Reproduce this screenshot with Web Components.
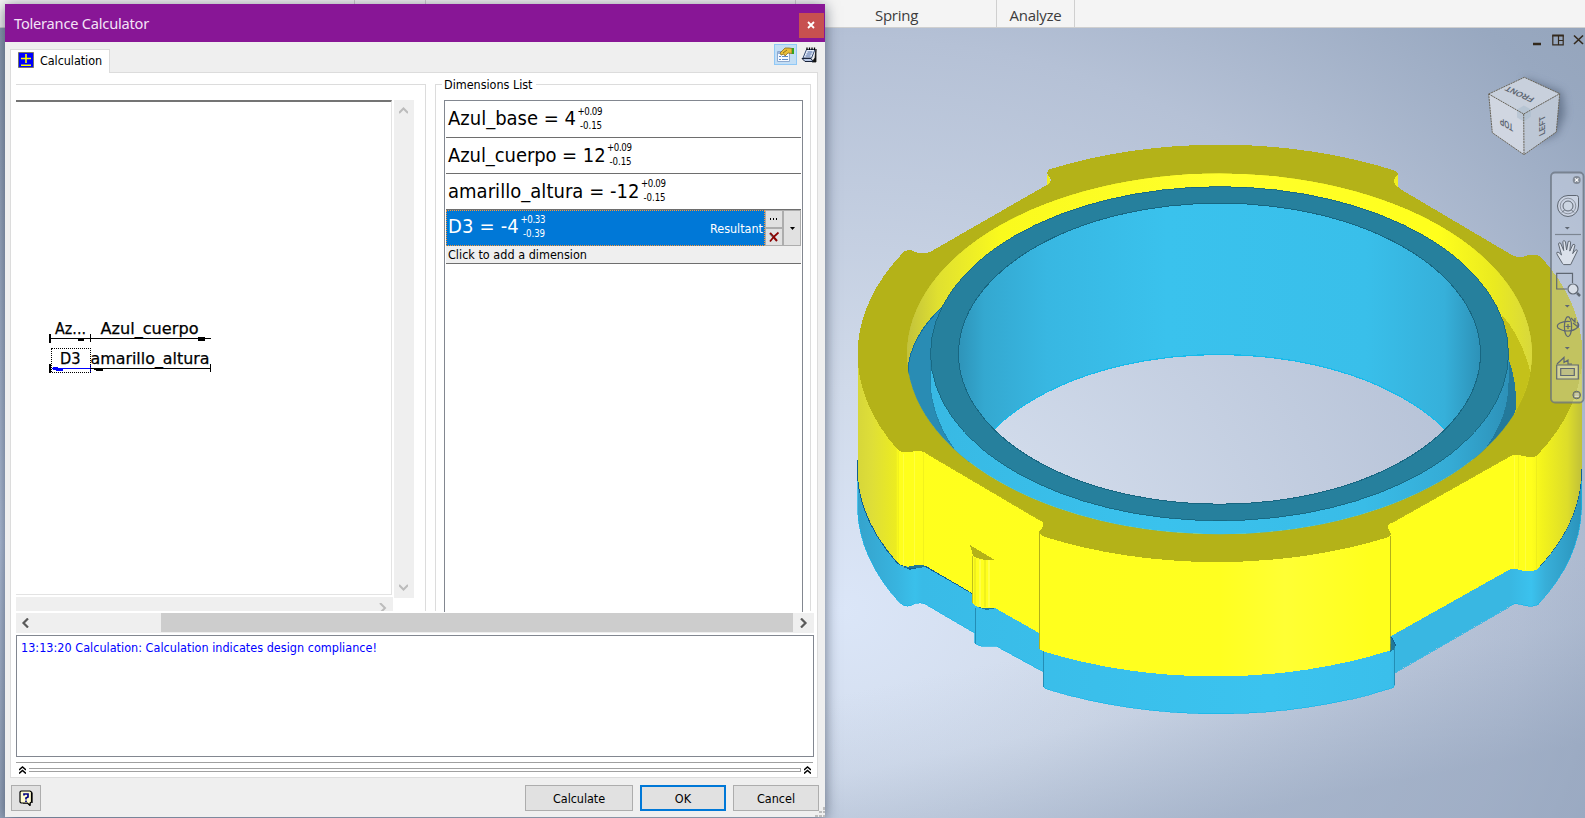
<!DOCTYPE html>
<html lang="en">
<head>
<meta charset="utf-8">
<title>Tolerance Calculator</title>
<style>
html,body{margin:0;height:100%;overflow:hidden}
body{font-family:"DejaVu Sans Condensed","DejaVu Sans",sans-serif;font-size:12.5px;color:#000}
</style>
</head>
<body>
<cad-app></cad-app>
<script>
const define = (name, html, init) => {
  const t = document.createElement('template');
  t.innerHTML = html;
  customElements.define(name, class extends HTMLElement {
    connectedCallback() {
      if (this.shadowRoot) return;
      this.attachShadow({mode: 'open'}).append(t.content.cloneNode(true));
      if (init) init(this, this.shadowRoot);
    }
  });
};

/* Label whose tracking is adjusted so that it takes the width given in "w". */
define('ui-label', `<style>:host{display:inline-block;white-space:pre;flex:none}</style><slot></slot>`, el => {
  const w = +el.getAttribute('w');
  if (!w) return;
  const cs = getComputedStyle(el), c = document.createElement('canvas').getContext('2d');
  c.font = `${cs.fontSize} ${cs.fontFamily}`;
  const s = el.textContent;
  el.style.letterSpacing = ((w - c.measureText(s).width) / s.length).toFixed(3) + 'px';
});

define('ribbon-bar', `<style>
:host{display:flex;background:#f4f4f4;border-bottom:1px solid #cfcfcf;box-sizing:border-box;height:28px;font:15px/31px "Open Sans","Noto Sans",sans-serif;color:#3c3c3c}
div{box-sizing:border-box;border-right:1px solid #cfcfcf;height:27px;text-align:center}
.a{width:355px}.b{width:71px}.c{width:370px}.d{width:201px}.e{width:78px}
.d{text-align:left;padding-left:79px}
</style><div class="a"></div><div class="b"></div><div class="c"></div><div class="d"><ui-label w="43">Spring</ui-label></div><div class="e"><ui-label w="52">Analyze</ui-label></div>`);

define('ui-button', `<style>
:host{box-sizing:border-box;display:flex;align-items:center;justify-content:center;height:26px;background:#e1e1e1;border:1px solid #adadad}
:host([primary]){border:2px solid #0078d7}
</style><slot></slot>`);

define('dimension-row', `<style>
:host{box-sizing:border-box;display:flex;height:36px;border-bottom:1px solid #6e6e6e;padding-left:2px}
:host([first]){height:37px}
:host([selected]){padding:0;border:0}
.main{display:flex;flex:1}
:host([selected]) .main{box-sizing:border-box;background:#0078d7;color:#fff;border:1px dotted #ff9632;padding-left:1px}
.name{font-size:20px;line-height:34px}
:host([first]) .name{line-height:35px}
.tol{width:24px;margin:3px 0 0 2px;font-size:9.600px;line-height:14px;text-align:right;display:flex;flex-direction:column;align-items:flex-end}
:host([first]) .tol{margin-top:4px}
:host([selected]) .name{line-height:33px;margin-top:-1px}
:host([selected]) .tol{margin-top:2px}
</style><div class="main"><div class="name"><slot></slot></div><div class="tol"><slot name="up"></slot><slot name="low"></slot></div><slot name="note"></slot></div><slot name="tools"></slot>`);

define('row-tools', `<style>
:host{display:grid;grid-template-columns:18px 18px;grid-template-rows:18px 18px}
div{box-sizing:border-box;background:#e1e1e1;border:1px solid #adadad;display:flex;align-items:center;justify-content:center}
.drop{grid-column:2;grid-row:1/3}
</style><div><svg width="8" height="2" shape-rendering="crispEdges"><path d="M0 0h1v2H0zM3 0h1v2H3zM6 0h1v2H6z"/></svg></div>
<div class="drop"><svg width="5" height="3"><path d="M0 0h5L2.500 3z"/></svg></div>
<div><svg width="12" height="12" fill="none"><path d="M2 2l7 8" stroke="#8b0000" stroke-width="2"/><path d="M10.500 1.500Q5 6 2 10.500" stroke="#8b0000" stroke-width="1.700"/><path d="M2 3l3 3" stroke="#555"/></svg></div>`);

define('dimensions-list', `<style>
:host{box-sizing:border-box;display:block;width:376px;height:527px;border:1px solid #dcdcdc;border-bottom:0;padding:0 7px 0 8px}
.legend{height:16px;width:92px;margin-top:-8px;margin-left:-2px;padding-left:2px;background:#fff;line-height:15px}
.box{box-sizing:border-box;width:359px;height:512px;margin-top:7px;border:1px solid #828790;border-bottom:0;padding:0 1px}
.add{box-sizing:border-box;background:#efefef;height:18px;border-bottom:1px solid #6e6e6e;padding-left:2px;line-height:17px}
.note{margin-left:auto;align-self:center;padding-right:1px;padding-top:1px}
</style><div class="legend"><ui-label w="88.500">Dimensions List</ui-label></div>
<div class="box">
<dimension-row first><ui-label w="128">Azul_base = 4</ui-label><ui-label slot="up" w="24.500">+0.09</ui-label><ui-label slot="low" w="22">-0.15</ui-label></dimension-row>
<dimension-row><ui-label w="157.500">Azul_cuerpo = 12</ui-label><ui-label slot="up" w="24.500">+0.09</ui-label><ui-label slot="low" w="22">-0.15</ui-label></dimension-row>
<dimension-row><ui-label w="191.500">amarillo_altura = -12</ui-label><ui-label slot="up" w="24.500">+0.09</ui-label><ui-label slot="low" w="22">-0.15</ui-label></dimension-row>
<dimension-row selected><ui-label w="71">D3 = -4</ui-label><ui-label slot="up" w="24.500">+0.33</ui-label><ui-label slot="low" w="22">-0.39</ui-label><ui-label class="note" slot="note" w="53">Resultant</ui-label><row-tools slot="tools"></row-tools></dimension-row>
<div class="add"><ui-label w="139">Click to add a dimension</ui-label></div>
</div>`);

define('chain-preview', `<style>
:host{box-sizing:border-box;display:grid;grid-template-columns:376px 2px 20px;grid-template-rows:498px 14px;width:410px;height:527px;overflow:hidden;border:1px solid #dcdcdc;border-width:1px 1px 0 0;padding-top:15px;align-content:start}
.canvas{box-sizing:border-box;height:495px;border:1px solid #e3e3e3;border-top:2px solid #747474;border-left:0}
.v{grid-column:3;background:#efefef;display:flex;flex-direction:column;justify-content:space-between;align-items:center;padding:7px 1px 7px 0;box-sizing:border-box}
.h{grid-row:2;grid-column:1/3;width:377px;margin-top:-1px;background:#efefef;height:15px;display:flex;justify-content:flex-end;align-items:flex-end;padding-right:6px;box-sizing:border-box;overflow:hidden}
svg{display:block}
text{font:15.500px "DejaVu Sans",sans-serif}
</style>
<div class="canvas"><svg width="375" height="491" viewBox="16 102 375 491" shape-rendering="crispEdges">
<g stroke="#000" stroke-width=".25"><text x="55" y="334" textLength="31" lengthAdjust="spacingAndGlyphs">Az...</text><text x="100.500" y="334" textLength="98" lengthAdjust="spacingAndGlyphs">Azul_cuerpo</text><text x="60" y="364" textLength="20.500" lengthAdjust="spacingAndGlyphs">D3</text><text x="90.500" y="364" textLength="119" lengthAdjust="spacingAndGlyphs">amarillo_altura</text></g>
<path d="M49 334h2v9h-2zM50 338h161v1H50zM90 334h1v8h-1zM78 339h5v-1h5v1h-4v2h-6zM198 337h7v1h4v1h-4v2h-7zM49 364h2v9h-2zM90 368h121v1H90zM210 364h1v8h-1zM94 368h4v1h5v2h-7v-1h-2z"/>
<path d="M52 368h38v1H52zM90 364h1v8h-1zM53 367h5v1h5v3h-7v-1h-3z" fill="#00f"/>
<path d="M51.500 348.500h38.500v24H51.500z" fill="none" stroke="#000" stroke-dasharray="1 1"/></svg></div>
<div class="v"><svg width="9" height="7" fill="none" stroke="#bcbcbc" stroke-width="2"><path d="M0 6l4.500-4.500L9 6"/></svg><svg width="9" height="7" fill="none" stroke="#bcbcbc" stroke-width="2"><path d="M0 1l4.500 4.500L9 1"/></svg></div>
<div class="h"><svg width="8" height="9" fill="none" stroke="#bcbcbc" stroke-width="2"><path d="M1 0l5 5-5 5"/></svg></div>`);

define('scroll-bar', `<style>
:host{display:flex;width:798px;height:20px;background:#efefef;align-items:center}
.l{width:145px;display:flex;padding-left:5px;box-sizing:border-box}.t{flex:1;background:#cdcdcd;height:19px;align-self:flex-start}.r{width:21px;display:flex;justify-content:center}
svg{margin-top:-1px}
</style><div class="l"><svg width="9" height="10" fill="none" stroke="#5a5a5a" stroke-width="2.200"><path d="M7 .5L2.500 5 7 9.500"/></svg></div><div class="t"></div><div class="r"><svg width="9" height="10" fill="none" stroke="#5a5a5a" stroke-width="2.200"><path d="M2 .5L6.500 5 2 9.500"/></svg></div>`);

define('message-log', `<style>
:host{box-sizing:border-box;display:block;width:798px;height:122px;margin-top:2px;border:1px solid #828790;padding:3px 4px;color:#00f;line-height:17px}
</style><slot></slot>`);

define('split-handle', `<style>
:host{display:flex;width:797px;margin-top:5px;border-top:1px solid #a0a0a0;height:14px;align-items:center;justify-content:space-between;padding:0 2px 0 3px;box-sizing:border-box}
i{display:block;width:772px;height:4px;border:1px solid #a0a0a0;border-left:0;box-sizing:border-box}
</style><svg width="7" height="8" fill="none" stroke="#000" stroke-width="1.500"><path d="M0 4l3.500-3L7 4M0 7.500l3.500-3 3.500 3"/></svg><i></i><svg width="7" height="8" fill="none" stroke="#000" stroke-width="1.500"><path d="M0 4l3.500-3L7 4M0 7.500l3.500-3 3.500 3"/></svg>`);

define('tolerance-dialog', `<style>
:host{position:absolute;left:5px;top:4px;width:820px;height:813px;background:#efefef;box-shadow:0 2px 13px rgba(10,20,40,.55);display:flex;flex-direction:column}
header{height:38px;background:#881696;color:#f4e4f6;display:flex;justify-content:space-between;font:14.600px/38px "Noto Sans","Open Sans",sans-serif;padding-left:9px;box-sizing:border-box;flex:none}
.close{width:25px;height:25px;background:#c75050;margin:9px 1px 0 0;display:grid;place-items:center}
.close svg{margin:-1px 1px 0 0}
.tabs{height:31px;display:flex;justify-content:space-between;flex:none}
.tab{box-sizing:border-box;margin:7px 0 0 5px;width:100px;height:24px;border:1px solid #dcdcdc;border-bottom:0;background:#fff;display:flex;position:relative;z-index:1;padding:2px 0 0 7px;line-height:18px}
.tab svg{margin-right:6px}
.tools{display:flex;padding:2px 8px 0 0}
.sel{box-sizing:border-box;width:23px;height:21px;background:#c3def5;border:1px solid #90c8f6;display:grid;place-items:center;margin-right:4px}
.note{margin-top:3px}
main{box-sizing:border-box;margin:-1px 7px 0 5px;border:1px solid #dcdcdc;background:#fff;height:706px;padding:11px 0 0 5px;flex:none}
.cols{display:flex;gap:9px;height:529px}
footer{display:flex;padding:7px 6px 0 6px;height:26px}
.q{width:30px;margin-right:484px}.c{width:108px;margin-right:7px}.o{width:86px;margin-right:7px}.x{width:86px}
.grip{position:absolute;right:0;bottom:0}
</style>
<header><ui-label w="135">Tolerance Calculator</ui-label><div class="close"><svg width="8" height="8"><path d="M1 1l6 6M7 1L1 7" stroke="#fff" stroke-width="1.800"/></svg></div></header>
<div class="tabs"><div class="tab"><svg width="16" height="16"><path fill="#00f" stroke="#77776a" d="M.5.500h15v15H.5z"/><path d="M8 2v9M3 6.500h10M3 13.200h10" stroke="#ff0" stroke-width="1.600"/></svg><ui-label w="62">Calculation</ui-label></div>
<div class="tools"><div class="sel"><svg width="17" height="15"><path d="M.5 4.500h12v10H.5z" fill="#f7faff" stroke="#8da9cf"/><path d="M1 5h4v2H1z" fill="#9db9e4"/><path d="M2 9.500h2M5 9.500h6M2 12.500h2M5 12.500h6" stroke="#5e8bc8"/><path d="M3 6L8 1h4l3 .5v5l-4-.5-3 3-1-2-3 1z" fill="#e8bd38" stroke="#7c5d15" stroke-width=".7"/><path d="M6 6l4-3" stroke="#7c5d15" stroke-width=".8"/><path d="M15 1h2v6h-2z" fill="#36a31f"/></svg></div>
<svg class="note" width="16" height="16"><path d="M15 2v13H11l3-4z" fill="#111" stroke="#111" stroke-width=".8"/><path d="M5.500 2.500h8.500L10.500 11H2z" fill="#e9f0fc" stroke="#33486f"/><path d="M6.500 5h5M5.500 7h5M4.500 9h5" stroke="#46659f"/><path d="M1 11.500h9l2 3H4z" fill="#b9c8e4" stroke="#182238"/><path d="M6 .5v2.500M8.500.5v2.500M11 .5v2.500M13.500.5v2.500" stroke="#000" stroke-width="1.300"/></svg></div></div>
<main><div class="cols"><chain-preview></chain-preview><dimensions-list></dimensions-list></div>
<scroll-bar></scroll-bar><message-log><ui-label w="356">13:13:20 Calculation: Calculation indicates design compliance!</ui-label></message-log><split-handle></split-handle></main>
<footer><ui-button class="q"><svg width="15" height="16"><path d="M4 2.500h10V13h-2l-1 3-2-2H4z" fill="#555"/><path d="M2 1h9l1.500 1v10l-1.500 1v2.500L8.500 13H2L1 12V2z" fill="#fffbd0" stroke="#000" stroke-width="1.200"/><path d="M5 5.500V4h4v3L7 8v1.500M7 10.500V12" stroke="#000080" stroke-width="1.700" fill="none"/></svg></ui-button><ui-button class="c"><ui-label w="52">Calculate</ui-label></ui-button><ui-button class="o" primary><ui-label w="16.500">OK</ui-label></ui-button><ui-button class="x"><ui-label w="38">Cancel</ui-label></ui-button></footer>
<svg class="grip" width="10" height="10"><path fill="#bcbcbc" d="M8 0h2v3H8zM4 4h3v2H4zM8 4h2v2H8zM0 8h3v2H0zM4 8h3v2H4zM8 8h2v2H8z"/></svg>`);

define('view-cube', `<style>:host{position:absolute;left:1480px;top:70px}svg{display:block}text{font:bold 9px "Liberation Sans",sans-serif;fill:#5f6874;text-anchor:middle}</style>
<svg width="95" height="90" viewBox="1480 70 95 90"><defs><filter id="b" x="-30%" y="-30%" width="160%" height="160%"><feGaussianBlur stdDeviation="4"/></filter></defs>
<path d="M1524 78l38 14 3 22-8 20-20 8z" fill="#59687f" opacity=".75" filter="url(#b)"/>
<path d="M1524.300 77.300l35.400 16.400-36 20.300-35-20z" fill="#c8d0dc"/><path d="M1488.700 94l35 20 .3 40.700-31.700-22z" fill="#d0d6e1"/><path d="M1559.700 93.700l-36 20.300.3 40.700 32.300-22.700z" fill="#bdc7d5"/>
<path d="M1524 105.500l7 4v7l-7 5-7-4v-8z" fill="#a9bbcc" opacity=".55"/>
<path d="M1488.700 94l35.600-16.700 35.400 16.400-3.400 38.300-32.300 22.700-31.700-22zl35 20 36-20.300M1523.700 114l.3 40.700" fill="none" stroke="#686357" stroke-dasharray="2 .7"/>
<text transform="matrix(-.88 -.4 .62 -.68 1521.500 92)">FRONT</text><text transform="matrix(-.72 -.42 0 -1.150 1506.500 121)">TOP</text><text transform="matrix(0 -.85 .95 -.45 1545 124.500)">LEFT</text></svg>`);

define('nav-bar', `<style>:host{position:absolute;left:1550px;top:171px}svg{display:block}</style>
<svg width="35" height="233" viewBox="1550 171 35 233" fill="none" stroke="#5f6772" stroke-width="1.200">
<rect x="1551" y="172.500" width="32.500" height="230" rx="4" fill="#e1e7f2" fill-opacity=".33" stroke="#68717e" stroke-opacity=".75" stroke-width="1.800"/>
<circle cx="1576.700" cy="180" r="4" fill="#838b97" stroke="none"/><path d="M1575 178.300l3.400 3.400m0-3.400l-3.400 3.400" stroke="#fff"/>
<path d="M1568 195.500h8.500q2 0 2 2v8.500a10.500 10.500 0 1 1-10.500-10.500z" fill="#dce2ec" fill-opacity=".55" stroke-width="1"/><circle cx="1568" cy="206" r="7.800" stroke-width=".8" stroke="#7b838e"/><circle cx="1568" cy="206" r="5" stroke-width="1" fill="#ccd5e2" fill-opacity=".7"/><path d="M1564.500 210l-2.500 2.500M1571.500 210l2.500 2.500" stroke-width="1"/>
<path d="M1555 234.500h26" stroke="#7c8591"/>
<g fill="#5f6772" stroke="none"><path d="M1564.800 227h5l-2.500 2.600zM1564.800 305h5l-2.500 2.600zM1564.800 347h5l-2.500 2.600z"/></g>
<path d="M1562.500 263.500l-4.500-7.500q-2-3-1-3.800 1.500-.8 4.500 2.800l-3-11q.2-1.800 2-1l3.200 7.500-.9-9q1-1.800 2.600 0l1.200 8.500 1.600-8.500q1.600-1.200 2.400.6l-.8 9 3-6.500q1.600-.8 2.200.5l-2.300 8.500 2.700-3.500q1.800-1 2 .8l-4 8.200-2.700 5.500h-7z" fill="#e3e8f0" fill-opacity=".8" stroke-width="1"/>
<path d="M1572.500 283v-9.700h-15.800V289h10.500"/><circle cx="1573" cy="289" r="5" fill="#e3e7ec" fill-opacity=".75"/><path d="M1577 293l3 3" stroke-width="2.500"/>
<ellipse cx="1568" cy="326.700" rx="3.600" ry="10"/><path d="M1577 322q3 3 1 5-4 4-10 4t-10-3q-2-3 2-5 4-2 10-1.500M1571 318l4 4v-4M1573 323l5 4v-4M1568 324v5M1565.500 326.500h5"/>
<path d="M1556.700 365h21.600v14h-21.600z" fill="#e4e4cf" fill-opacity=".5"/><path d="M1557 364l7-6.500v5l4-2.500v4h4"/><path d="M1560.700 368.500h13.600v7h-13.600z" fill="#b3b378" fill-opacity=".6"/>
<circle cx="1576.700" cy="395" r="3.800" fill="#838361" fill-opacity=".6" stroke-width="1"/><path d="M1574.500 394h4.400M1574.500 396.200h4.400" stroke="#eee"/></svg>`);

define('model-view', `<style>:host{display:block;width:1585px;height:790px}svg{display:block}</style>
<svg width="1585" height="790" viewBox="0 28 1585 790"><defs>
<radialGradient id="bg" gradientUnits="userSpaceOnUse" cx="0" cy="0" r="1" gradientTransform="translate(840 610) scale(1050 880)"><stop offset="0" stop-color="#dbe6f8"/><stop offset=".25" stop-color="#d0daea"/><stop offset=".65" stop-color="#b5c1d6"/><stop offset=".9" stop-color="#98a8c0"/><stop offset="1" stop-color="#94a4bb"/></radialGradient>
<linearGradient id="low" gradientUnits="userSpaceOnUse" x1="1100" y1="640" x2="1140" y2="835"><stop offset="0" stop-color="#8b9cb6" stop-opacity="0"/><stop offset=".4" stop-color="#8b9cb6" stop-opacity=".1"/><stop offset="1" stop-color="#8b9cb6" stop-opacity=".5"/></linearGradient>
<linearGradient id="left" gradientUnits="userSpaceOnUse" x1="0" y1="28" x2="0" y2="818"><stop offset="0" stop-color="#8c9bb1"/><stop offset=".65" stop-color="#b4c3dc"/><stop offset="1" stop-color="#97a6bd"/></linearGradient>
<linearGradient id="yw" gradientUnits="userSpaceOnUse" x1="857" y1="0" x2="1582" y2="0"><stop offset="0" stop-color="#d6d63a"/><stop offset=".02" stop-color="#dede38"/><stop offset=".054" stop-color="#ecec20"/><stop offset=".057" stop-color="#ffff1c"/><stop offset=".5" stop-color="#ffff20"/><stop offset=".59" stop-color="#ffff34"/><stop offset=".71" stop-color="#ffff1c"/><stop offset=".93" stop-color="#ffff1c"/><stop offset=".945" stop-color="#f3f31c"/><stop offset=".98" stop-color="#dddd2a"/><stop offset="1" stop-color="#c0c03a"/></linearGradient>
<linearGradient id="bw" gradientUnits="userSpaceOnUse" x1="857" y1="0" x2="1582" y2="0"><stop offset="0" stop-color="#35a3cc"/><stop offset=".055" stop-color="#38b4df"/><stop offset=".08" stop-color="#3ac0eb"/><stop offset=".09" stop-color="#39bbe7"/><stop offset=".57" stop-color="#3bc3ef"/><stop offset=".735" stop-color="#3abfeb"/><stop offset=".745" stop-color="#39b7e2"/><stop offset=".9" stop-color="#39b7e2"/><stop offset=".93" stop-color="#3bc2ee"/><stop offset=".95" stop-color="#38aed8"/><stop offset="1" stop-color="#2a93bb"/></linearGradient>
<linearGradient id="iw" gradientUnits="userSpaceOnUse" x1="958" y1="0" x2="1481" y2="0"><stop offset="0" stop-color="#2e93b8"/><stop offset=".05" stop-color="#34a8d0"/><stop offset=".17" stop-color="#38b7e2"/><stop offset=".4" stop-color="#3ac2ed"/><stop offset=".78" stop-color="#39bfea"/><stop offset=".93" stop-color="#36b0da"/><stop offset="1" stop-color="#2d91b7"/></linearGradient>
<linearGradient id="yi" gradientUnits="userSpaceOnUse" x1="907" y1="0" x2="1532" y2="0"><stop offset="0" stop-color="#c2c23c"/><stop offset=".05" stop-color="#e0e030"/><stop offset=".15" stop-color="#fafa1d"/><stop offset=".5" stop-color="#ffff2c"/><stop offset=".85" stop-color="#ffff1c"/><stop offset=".94" stop-color="#eaea20"/><stop offset="1" stop-color="#d8d83c"/></linearGradient>
<linearGradient id="ow" gradientUnits="userSpaceOnUse" x1="930" y1="0" x2="1509" y2="0"><stop offset="0" stop-color="#38b9e4"/><stop offset=".4" stop-color="#3ac2ed"/><stop offset=".75" stop-color="#39bce7"/><stop offset=".9" stop-color="#35abd5"/><stop offset="1" stop-color="#2d91b8"/></linearGradient>
<clipPath id="hole"><ellipse cx="1219.500" cy="353.700" rx="312.700" ry="180.500"/></clipPath>
<clipPath id="bore"><ellipse cx="1219.500" cy="353.700" rx="261" ry="150.500"/></clipPath>
</defs>
<rect width="1585" height="818" fill="url(#bg)"/><path d="M0 560h1585v258H0z" fill="url(#low)"/><path d="M0 28h5v790H0z" fill="url(#left)"/>
<g shape-rendering="crispEdges">
<path fill="url(#bw)" stroke="#16b5e8" stroke-width=".7" d="M857.500 462V510A362 209 0 0 0 900 603Q907 609 915 603.500 920 602 925 604L974.500 633V642Q978 647 985 646H996L1043.500 672V686Q1044 689 1048 689.500A362 209 0 0 0 1392 688Q1394.500 687 1394.500 685V672.700L1510 606Q1514 602.500 1521 604.500 1532 608 1538 604.500A362 209 0 0 0 1581.500 510V466z"/>
<path d="M857.500 460V463A362 209 0 0 0 898 563.500L910 569 925 566 972 593M1391 637L1395 645 1394 648 1391 651M1537 569A362 209 0 0 0 1581.500 466" fill="none" stroke="#115f91" stroke-width="1.400"/>
<path d="M904 567q7-1 14-3l8 2-5 2q-10 1-17 0zM978 607h14l4 1-10 2zM1391 637l4 8v4l-5 3z" fill="#217896"/>
<path d="M975 608v36M1043.500 651v36M1394.500 648v37" stroke="#238db5"/>
<path fill="url(#yw)" d="M857.500 354V468A362 209 0 0 0 898 563Q906 569 916 565 920 564 926 566L972 593V602Q975 607 981 607.500L995 608 1039 633V649L1044 651.500A362 209 0 0 0 1390 650.500V636.700L1510 569.300Q1514 568 1520 570 1531 573 1537 569.300A362 209 0 0 0 1581.500 468V354z"/>
<path fill="#b4b218" fill-rule="evenodd" d="M1052 168.500A362 209 0 0 1 1395 170.700L1398 174V187L1401 189.500 1513 255.700Q1520 258 1526 256 1532 253 1540 256A362 209 0 0 1 1537 455.500Q1532 459 1526 456.500 1517 454 1510 456L1391.700 522.700Q1385 526 1389 530 1393 535 1388 537.300A362 209 0 0 1 1042 536Q1037 532 1042 528 1045 524 1041.500 520.700L926 453Q921 450 913 451.500 903 454 898 450A362 209 0 0 1 904 251.700Q910 248 915 252 922 254.500 930 252L1046.700 185 1051 180 1047 173Q1048 169 1052 168.500z"/>
<path d="M1047 174q4 4 3 8l-3 3zM1398 174q-6 7-3 10l3 4z" fill="#f0ef20"/>
<path d="M898 451V563M923 452V565M1518 455V568M1536 456V570" stroke="#dada20" stroke-opacity=".35"/>
<path d="M903 454V567M914 452V565M1514 456V568M1525 458V570" stroke="#ffff5a" stroke-opacity=".6"/>
<path d="M1039.500 531V649M1390.500 536V650" stroke="#989718" stroke-opacity=".75"/>
<path d="M970 545l24 14.500H983q-7-1-10-4z" fill="#b4b218"/><path d="M972.500 556v47" stroke="#c0bf1c"/><path d="M975 558v47M985 560v47" stroke="#d3d31d" stroke-opacity=".35" stroke-width="2"/><path d="M980 560v47M989 560v47" stroke="#ffff63" stroke-width="2" stroke-opacity=".6"/>
<g clip-path="url(#hole)">
<ellipse cx="1219.500" cy="353.700" rx="312.700" ry="180.500" fill="url(#yi)"/>
<path d="M1502 315q21 23 30 64v40l-60 20z" fill="#c4c11a"/>
<path d="M943 306q-33 31-35 64v60l50 40 40-30-40-110z" fill="#298cb4" stroke="#116f9d" stroke-width="1"/>
<path d="M1508 358q9 22 8 50l-12 42-34 10v-60z" fill="#23799a"/>
<path d="M930.500 354V383A289 167 0 0 0 1508.500 383V354z" fill="url(#ow)"/>
<path d="M930 360v23q2 35 24 66" fill="none" stroke="#2486ac"/>
<ellipse cx="1219.500" cy="353.700" rx="289" ry="167" fill="#26809d" stroke="#176681" stroke-width=".9"/>
</g>
<path d="M926 453L1041 520.700M1510 456L1391.700 522.700" stroke="#b9b719" fill="none"/>
<ellipse cx="1219.500" cy="353.700" rx="261" ry="150.500" fill="url(#iw)"/>
<g clip-path="url(#bore)"><ellipse cx="1219.500" cy="505" rx="261" ry="150.500" fill="url(#bg)" stroke="#18baea" stroke-width="1.200"/></g>
<ellipse cx="1219.500" cy="353.700" rx="261" ry="150.500" fill="none" stroke="#176681" stroke-width="1"/>
</g>
<g fill="none" stroke="#33291d" stroke-width="1.600"><path d="M1533 44h8" stroke-width="2.500"/><path d="M1552.800 35.200h10.400v9.600h-10.400zM1552 36h12M1558.500 36v9M1558.500 40.500h5" stroke-width="1.200"/><path d="M1574 35.500l9 8.500M1583 35.500l-9 8.500"/></g>
</svg>`);

define('cad-app', `<style>:host{display:flex;flex-direction:column;width:1585px;height:818px;position:relative;overflow:hidden}ribbon-bar{flex:none}</style>
<ribbon-bar></ribbon-bar><model-view></model-view><view-cube></view-cube><nav-bar></nav-bar><tolerance-dialog></tolerance-dialog>`);
</script>
</body>
</html>
